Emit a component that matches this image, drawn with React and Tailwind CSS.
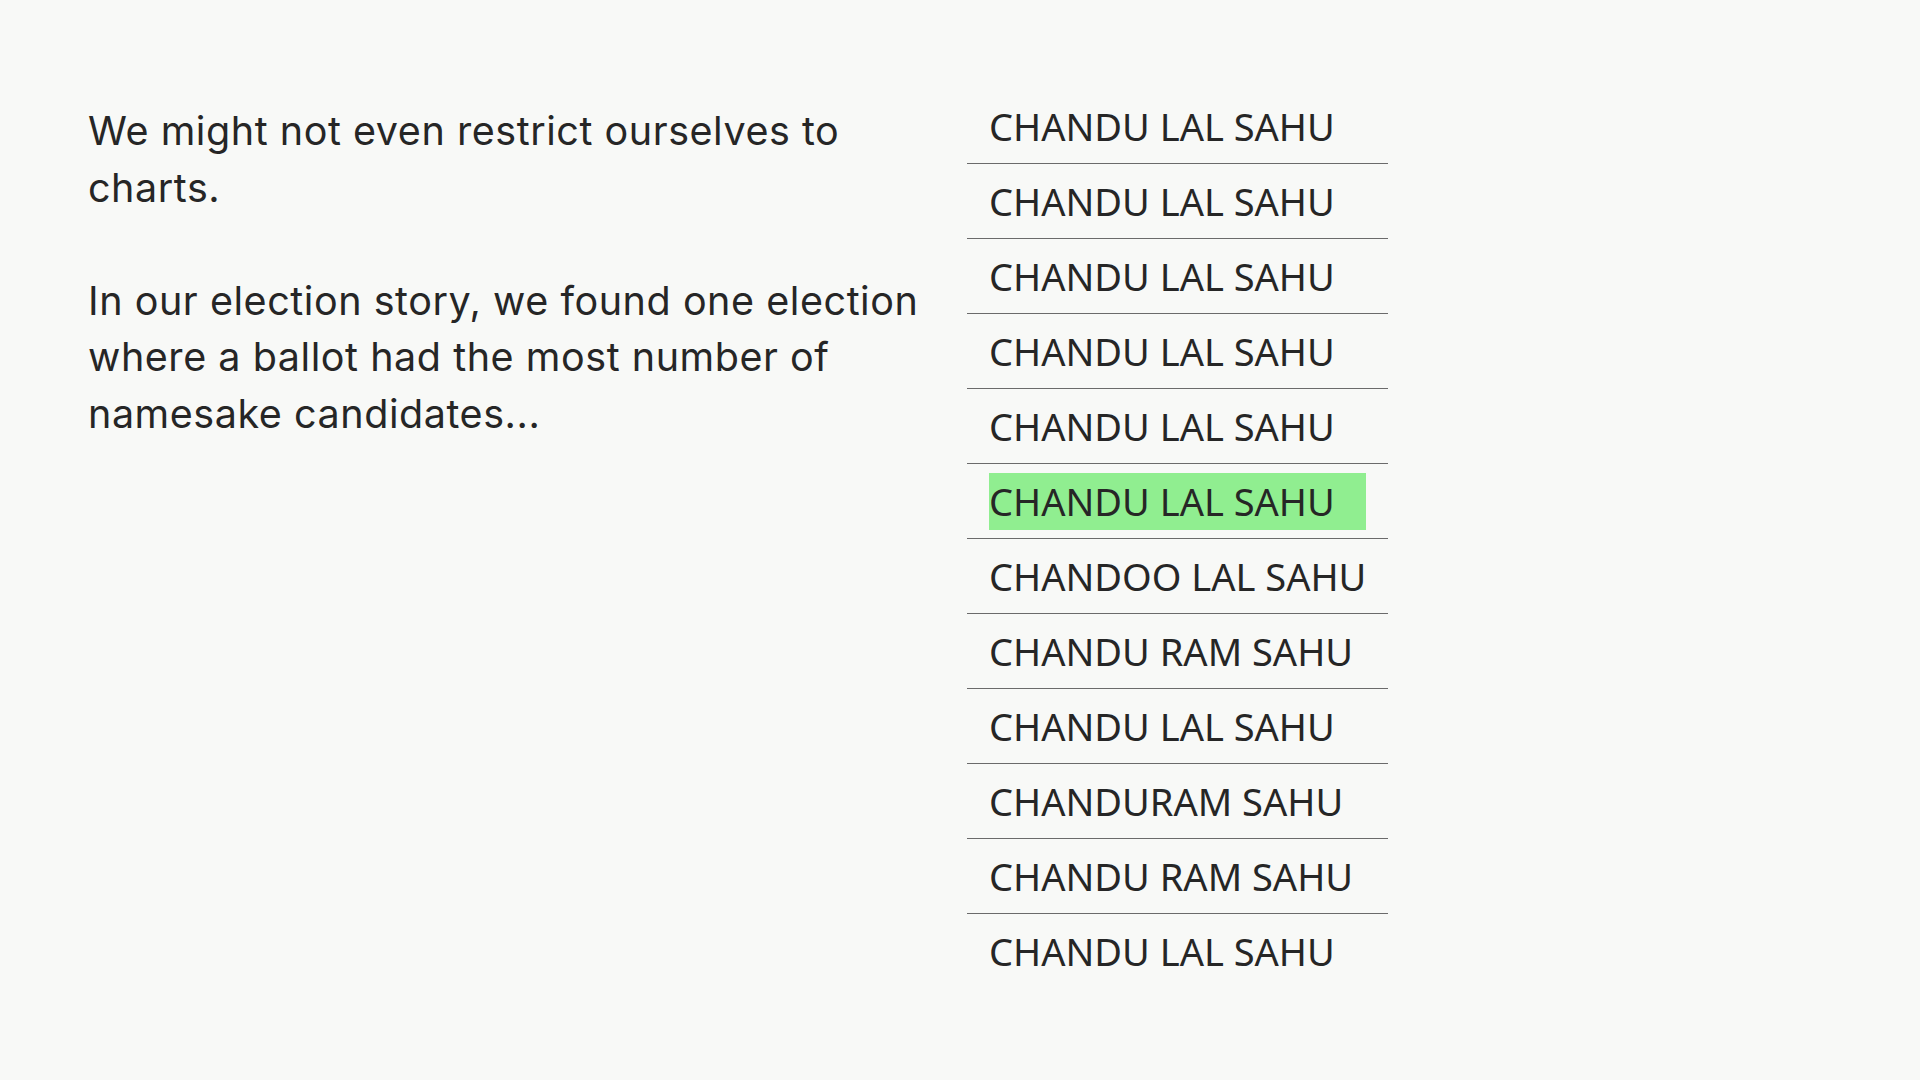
const names = [
  "CHANDU LAL SAHU",
  "CHANDU LAL SAHU",
  "CHANDU LAL SAHU",
  "CHANDU LAL SAHU",
  "CHANDU LAL SAHU",
  "CHANDU LAL SAHU",
  "CHANDOO LAL SAHU",
  "CHANDU RAM SAHU",
  "CHANDU LAL SAHU",
  "CHANDURAM SAHU",
  "CHANDU RAM SAHU",
  "CHANDU LAL SAHU",
];

function Ballot() {
  return (
    <div className="flex w-fit flex-col font-['Noto_Sans',sans-serif] text-[38px] text-[#262626]">
      {names.map((name, i) => (
        <div
          key={i}
          className={
            i === names.length - 1
              ? "flex h-[75px] items-center px-[22px]"
              : "flex h-[75px] items-center border-b border-[#6b6b6b] px-[22px]"
          }
        >
          {i === 5 ? (
            <div className="flex h-[57px] w-full items-center bg-[#90ee90]">{name}</div>
          ) : (
            <div className="w-full">{name}</div>
          )}
        </div>
      ))}
    </div>
  );
}

export default function App() {
  return (
    <div className="flex min-h-screen bg-[#f8f9f7] pl-[88px] pt-[89px]">
      <div className="w-[845px] shrink-0 pt-[14px] font-['Inter',sans-serif] text-[39.5px] leading-[56.5px] tracking-[0.55px] text-[#262626]">
        <p>We might not even restrict ourselves to charts.</p>
        <p className="mt-[56.5px]">
          In our election story, we found one election where a ballot had the most number of namesake candidates...
        </p>
      </div>
      <div className="ml-[34px]">
        <Ballot />
      </div>
    </div>
  );
}
